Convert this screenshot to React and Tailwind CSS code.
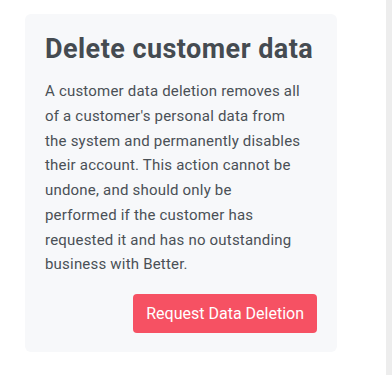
import React from 'react';

const lines = [
  'A customer data deletion removes all',
  "of a customer's personal data from",
  'the system and permanently disables',
  'their account. This action cannot be',
  'undone, and should only be',
  'performed if the customer has',
  'requested it and has no outstanding',
  'business with Better.',
];

const DeleteCustomerData = () => {
  return (
    <div className="rounded-md bg-[#f7f8fa] px-5 pt-5 pb-[19px]">
      <h2 className="text-[27px] font-bold leading-[31px] tracking-[0.45px] text-[#454b51]">
        Delete customer data
      </h2>
      {/* line breaks kept as in the design */}
      <p className="mt-[14px] whitespace-nowrap text-[15px] leading-[24.75px] tracking-[0.2px] text-[#4a5056]">
        {lines.map((line, i) => (
          <React.Fragment key={i}>
            {line}
            {i < lines.length - 1 && <br />}
          </React.Fragment>
        ))}
      </p>
      <div className="mt-[17px] flex justify-end">
        <button className="h-[39px] rounded-[4px] bg-[#f65163] px-[13px] text-[16px] text-white">
          Request Data Deletion
        </button>
      </div>
    </div>
  );
};

export default function App() {
  return (
    <div
      className="flex h-[375px] w-[392px] bg-white"
      style={{ fontFamily: 'Roboto, "Liberation Sans", sans-serif' }}
    >
      <div className="flex-1 pt-[14px] pl-[25px] pr-[49px]">
        <DeleteCustomerData />
      </div>
      <div className="w-[6px] bg-[#ededed]" />
    </div>
  );
}
